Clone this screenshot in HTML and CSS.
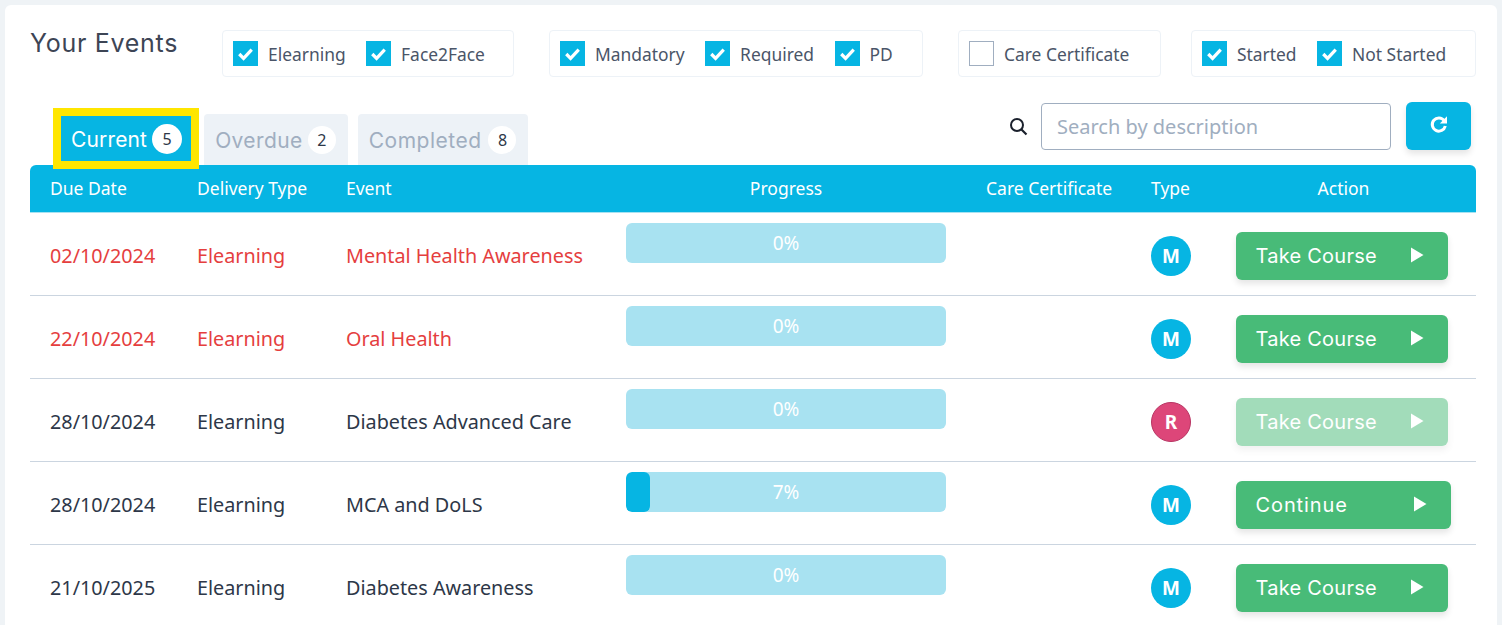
FILE: index.html
```html
<!DOCTYPE html>
<html lang="en">
<head>
<meta charset="utf-8">
<title>Your Events</title>
<link rel="stylesheet" href="styles.css">
</head>
<body>
<svg class="defs" width="0" height="0" aria-hidden="true">
  <symbol id="check" viewBox="0 0 24 24"><path d="M5.5 12.5l4.5 4.5 8.5-9" fill="none" stroke="#fff" stroke-width="3.4"/></symbol>
  <symbol id="play" viewBox="0 0 14 16"><path d="M1 .5L13.5 8 1 15.5z" fill="#fff"/></symbol>
</svg>
<main class="card">
  <section class="top">
    <h1 class="title">Your Events</h1>
    <div class="group g1">
      <label class="opt"><span class="box on"><svg><use href="#check"/></svg></span>Elearning</label>
      <label class="opt"><span class="box on"><svg><use href="#check"/></svg></span>Face2Face</label>
    </div>
    <div class="group g2">
      <label class="opt"><span class="box on"><svg><use href="#check"/></svg></span>Mandatory</label>
      <label class="opt"><span class="box on"><svg><use href="#check"/></svg></span>Required</label>
      <label class="opt"><span class="box on"><svg><use href="#check"/></svg></span>PD</label>
    </div>
    <div class="group g3">
      <label class="opt"><span class="box"></span>Care Certificate</label>
    </div>
    <div class="group g4">
      <label class="opt"><span class="box on"><svg><use href="#check"/></svg></span>Started</label>
      <label class="opt"><span class="box on"><svg><use href="#check"/></svg></span>Not Started</label>
    </div>
  </section>

  <section class="bar">
    <nav class="tabs">
      <a class="tab active">Current <span class="count">5</span></a>
      <a class="tab">Overdue <span class="count">2</span></a>
      <a class="tab">Completed <span class="count">8</span></a>
    </nav>
    <div class="tools">
      <svg class="search-ico" viewBox="0 0 20 20"><circle cx="9" cy="8" r="6" fill="none" stroke="#1a202c" stroke-width="2"/><path d="M13.5 12.5l5 5" stroke="#1a202c" stroke-width="2.2"/></svg>
      <input class="search" type="text" placeholder="Search by description">
      <button class="refresh" aria-label="Refresh"><svg viewBox="0 0 20 20"><path d="M15.2 6.6A6.6 6.6 0 1 0 16.3 12" fill="none" stroke="#fff" stroke-width="3"/><path d="M18 2.2v7.2h-7.2z" fill="#fff"/></svg></button>
    </div>
  </section>

  <section class="table">
    <div class="row head">
      <div>Due Date</div><div>Delivery Type</div><div>Event</div><div class="c-prog">Progress</div><div>Care Certificate</div><div>Type</div><div class="c-act">Action</div>
    </div>
    <div class="row late">
      <div>02/10/2024</div><div>Elearning</div><div>Mental Health Awareness</div>
      <div class="cell-prog"><div class="prog"><span>0%</span></div></div><div></div>
      <div><span class="type m">M</span></div>
      <div class="cell-act"><button class="go">Take Course<svg><use href="#play"/></svg></button></div>
    </div>
    <div class="row late">
      <div>22/10/2024</div><div>Elearning</div><div>Oral Health</div>
      <div class="cell-prog"><div class="prog"><span>0%</span></div></div><div></div>
      <div><span class="type m">M</span></div>
      <div class="cell-act"><button class="go">Take Course<svg><use href="#play"/></svg></button></div>
    </div>
    <div class="row">
      <div>28/10/2024</div><div>Elearning</div><div>Diabetes Advanced Care</div>
      <div class="cell-prog"><div class="prog"><span>0%</span></div></div><div></div>
      <div><span class="type r">R</span></div>
      <div class="cell-act"><button class="go off">Take Course<svg><use href="#play"/></svg></button></div>
    </div>
    <div class="row">
      <div>28/10/2024</div><div>Elearning</div><div>MCA and DoLS</div>
      <div class="cell-prog"><div class="prog"><i class="fill" style="width:7.5%"></i><span>7%</span></div></div><div></div>
      <div><span class="type m">M</span></div>
      <div class="cell-act"><button class="go wide">Continue<svg><use href="#play"/></svg></button></div>
    </div>
    <div class="row">
      <div>21/10/2025</div><div>Elearning</div><div>Diabetes Awareness</div>
      <div class="cell-prog"><div class="prog"><span>0%</span></div></div><div></div>
      <div><span class="type m">M</span></div>
      <div class="cell-act"><button class="go">Take Course<svg><use href="#play"/></svg></button></div>
    </div>
  </section>
</main>
</body>
</html>
```
FILE: styles.css
```css
* { box-sizing: border-box; }
html, body { margin: 0; height: 625px; overflow: hidden; }
body {
  background: #eff3f6;
  padding: 5px 5px 0;
  font-family: "Noto Sans", sans-serif;
  color: #2d3748;
}
.defs { position: absolute; }
.card {
  background: #fff;
  border-radius: 6px 6px 0 0;
  padding: 25px 21px 0 25px;
  height: 640px;
}
.top { display: flex; align-items: flex-start; height: 47px; }
.title {
  margin: 0;
  width: 192px;
  font: 400 25px/26px Inter, sans-serif;
  letter-spacing: .7px;
  color: #3d4555;
}
.group {
  display: flex;
  align-items: center;
  gap: 20px;
  height: 47px;
  padding: 0 10px;
  border: 1px solid #edf2f7;
  border-radius: 4px;
  font-size: 17.4px;
  line-height: 24px;
  color: #4a5568;
}
.g1 { width: 292px; margin-right: 35px; }
.g2 { width: 374px; margin-right: 35px; }
.g3 { width: 203px; margin-right: 30px; }
.g4 { width: 285px; }
.opt { display: flex; align-items: center; gap: 10px; padding-right: .5px; }
.box {
  width: 25px;
  height: 25px;
  border: 1px solid #a0aec0;
  display: block;
}
.box.on { background: #06b5e3; border-color: #06b5e3; }
.box svg { display: block; width: 23px; height: 23px; }

.bar { display: flex; justify-content: space-between; height: 88px; }
.tabs { display: flex; align-items: flex-end; gap: 10px; padding-left: 31px; }
.tab {
  display: flex;
  align-items: center;
  height: 51px;
  padding: 2px 12px 0 11px;
  gap: 5px;
  background: #edf2f7;
  border-radius: 4px 4px 0 0;
  font: 400 21px/28px Inter, sans-serif;
  letter-spacing: .4px;
  color: #a0aec0;
}
.tab:last-child { letter-spacing: .5px; gap: 7px; }
.tab.active {
  height: 45px;
  margin: 0 3px 4px 0;
  padding: 2px 9px 0 10px;
  background: #06b5e3;
  color: #fff;
  border-radius: 0;
  outline: 8px solid #ffe600;
  letter-spacing: .15px;
}
.count {
  width: 28px;
  height: 28px;
  margin-top: -2px;
  border-radius: 50%;
  background: #fff;
  color: #2d3748;
  font: 400 16px/28px "Noto Sans", sans-serif;
  letter-spacing: 0;
  text-align: center;
}
.active .count { width: 30px; height: 30px; line-height: 30px; }
.tools { display: flex; align-items: flex-start; padding: 25px 5px 0 0; }
.search-ico { width: 20px; height: 20px; margin: 15px 13px 0 0; }
.search {
  width: 350px;
  height: 47px;
  margin-top: 1px;
  padding: 0 15px;
  border: 1px solid #a0aec0;
  border-radius: 4px;
  font: 400 20px "Noto Sans", sans-serif;
  color: #2d3748;
  outline: none;
}
.search::placeholder { color: #a0aec0; opacity: 1; }
.refresh {
  width: 65px;
  height: 48px;
  margin-left: 15px;
  padding: 0 0 4px;
  border: 0;
  border-radius: 6px;
  background: #06b5e3;
  box-shadow: 0 4px 6px rgba(0,0,0,.1);
}
.refresh svg { width: 20px; height: 20px; vertical-align: middle; }

.row {
  display: grid;
  grid-template-columns: 147px 149px 280px 360px 165px 85px 260px;
  align-items: center;
  height: 83px;
  padding-top: 4px;
  border-bottom: 1px solid #cbd5e0;
  font-size: 19.8px;
  line-height: 26px;
  color: #2d3748;
}
.row > div { padding-left: 20px; }
.row.head {
  height: 48px;
  padding: 0 0 1px;
  border-bottom: 1px solid #a8e2f1;
  background: #06b5e3;
  color: #fff;
  font-size: 17.5px;
  line-height: 24px;
  border-radius: 6px 6px 0 0;
}
.row.late { color: #e53e3e; }
.row > .c-prog { text-align: center; padding: 0; }
.row > .c-act { text-align: center; padding: 0 25px 0 20px; }
.row > .cell-prog { align-self: start; padding: 6px 20px 0; }
.prog {
  position: relative;
  height: 40px;
  background: #a8e2f1;
  border-radius: 6px;
  overflow: hidden;
  color: #fff;
  font-size: 19px;
  line-height: 40px;
  text-align: center;
}
.prog span { position: relative; }
.fill { position: absolute; left: 0; top: 0; bottom: 0; background: #06b5e3; border-radius: 6px; }
.type {
  display: block;
  width: 40px;
  height: 40px;
  border-radius: 50%;
  color: #fff;
  font-size: 19px;
  font-weight: 700;
  line-height: 40px;
  text-align: center;
}
.type.m { background: #06b5e3; }
.type.r { background: #dd4679; border: 1px solid #b83563; line-height: 38px; }
.go {
  display: flex;
  align-items: center;
  justify-content: space-between;
  width: 212px;
  height: 48px;
  padding: 0 24px 0 19.5px;
  border: 0;
  border-radius: 6px;
  background: #48bb78;
  color: #fff;
  font: 400 20px Inter, sans-serif;
  letter-spacing: .25px;
  box-shadow: 0 4px 6px rgba(0,0,0,.1);
}
.go svg { width: 14px; height: 16px; margin-top: -3px; }
.go.wide { width: 215px; letter-spacing: .9px; }
.go.off { opacity: .5; }
```
